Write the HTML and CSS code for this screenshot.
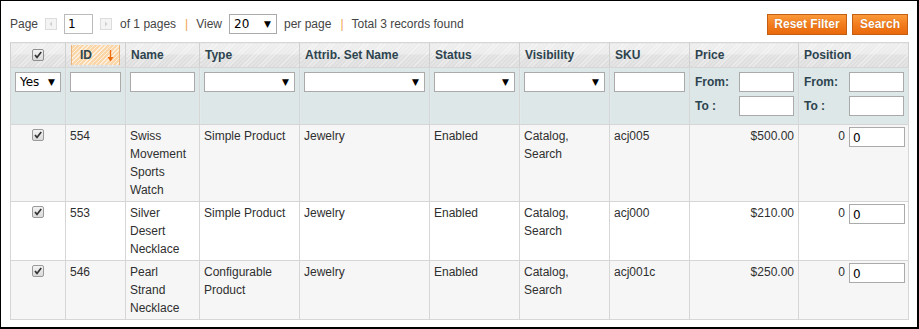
FILE: index.html
```html
<!DOCTYPE html>
<html>
<head>
<meta charset="utf-8">
<link rel="stylesheet" href="styles.css">
</head>
<body>
<div class="frame">
  <div class="toolbar">
    <div class="pager">
      <span class="lbl">Page</span>
      <span class="arrow prev"><svg width="12" height="12" viewBox="0 0 12 12"><rect x="0.5" y="0.5" width="11" height="11" fill="#f4f4f4" stroke="#dcdcdc"/><path d="M7 3.5 L4.5 6 L7 8.5 Z" fill="#d0d0d0"/></svg></span>
      <span class="txtbox page-in">1</span>
      <span class="arrow next"><svg width="12" height="12" viewBox="0 0 12 12"><rect x="0.5" y="0.5" width="11" height="11" fill="#f4f4f4" stroke="#dcdcdc"/><path d="M5 3.5 L7.5 6 L5 8.5 Z" fill="#d0d0d0"/></svg></span>
      <span class="lbl of">of 1 pages</span>
      <span class="sep">|</span>
      <span class="lbl">View</span>
      <span class="sel view-sel"><span>20</span><span class="dd">▼</span></span>
      <span class="lbl">per page</span>
      <span class="sep">|</span>
      <span class="lbl">Total 3 records found</span>
    </div>
    <div class="actions">
      <button class="btn reset">Reset Filter</button>
      <button class="btn search">Search</button>
    </div>
  </div>

  <table class="grid">
    <colgroup>
      <col class="w55"><col class="w60"><col class="w74"><col class="w100"><col class="w130"><col class="w90"><col class="w90"><col class="w80"><col class="w109"><col class="w110">
    </colgroup>
    <tr class="headings">
      <th class="c-check"><span class="cb cb-head"><svg width="12" height="12" viewBox="0 0 12 12"><defs><linearGradient id="cbg" x1="0" y1="0" x2="0" y2="1"><stop offset="0" stop-color="#f4f4f4"/><stop offset="1" stop-color="#d8d8d8"/></linearGradient></defs><rect x="0.5" y="0.5" width="11" height="11" rx="1.5" fill="url(#cbg)" stroke="#8f8f8f"/><path d="M3 6 L5 8.4 L9.2 3" fill="none" stroke="#333" stroke-width="1.7"/></svg></span></th>
      <th class="sorted"><span class="sortbox"><span>ID</span><svg class="sort-arrow" width="7" height="12" viewBox="0 0 7 12"><path d="M3.5 0 V10" stroke="#f06a0e" stroke-width="1.3"/><path d="M0.5 7 L3.5 11.5 L6.5 7 Z" fill="#f06a0e"/></svg></span></th>
      <th>Name</th>
      <th>Type</th>
      <th>Attrib. Set Name</th>
      <th>Status</th>
      <th>Visibility</th>
      <th>SKU</th>
      <th>Price</th>
      <th>Position</th>
    </tr>
    <tr class="filter">
      <th><span class="sel yes-sel"><span>Yes</span><span class="dd">▼</span></span></th>
      <th><span class="txtbox fin"></span></th>
      <th><span class="txtbox fin"></span></th>
      <th><span class="sel fsel"><span></span><span class="dd">▼</span></span></th>
      <th><span class="sel fsel"><span></span><span class="dd">▼</span></span></th>
      <th><span class="sel fsel"><span></span><span class="dd">▼</span></span></th>
      <th><span class="sel fsel"><span></span><span class="dd">▼</span></span></th>
      <th><span class="txtbox fin"></span></th>
      <th>
        <div class="range"><span class="rl">From:</span><span class="txtbox rin"></span></div>
        <div class="range"><span class="rl">To :</span><span class="txtbox rin"></span></div>
      </th>
      <th>
        <div class="range"><span class="rl">From:</span><span class="txtbox rin"></span></div>
        <div class="range"><span class="rl">To :</span><span class="txtbox rin"></span></div>
      </th>
    </tr>
    <tr class="row even">
      <td class="c-check"><span class="cb"><svg width="12" height="12" viewBox="0 0 12 12"><rect x="0.5" y="0.5" width="11" height="11" rx="1.5" fill="url(#cbg)" stroke="#9a9a9a"/><path d="M3 6 L5 8.4 L9.2 3" fill="none" stroke="#333" stroke-width="1.7"/></svg></span></td>
      <td>554</td>
      <td>Swiss Movement Sports Watch</td>
      <td>Simple Product</td>
      <td>Jewelry</td>
      <td>Enabled</td>
      <td>Catalog, Search</td>
      <td>acj005</td>
      <td class="num">$500.00</td>
      <td class="pos"><span class="posval">0</span><span class="txtbox pin">0</span></td>
    </tr>
    <tr class="row">
      <td class="c-check"><span class="cb"><svg width="12" height="12" viewBox="0 0 12 12"><rect x="0.5" y="0.5" width="11" height="11" rx="1.5" fill="url(#cbg)" stroke="#9a9a9a"/><path d="M3 6 L5 8.4 L9.2 3" fill="none" stroke="#333" stroke-width="1.7"/></svg></span></td>
      <td>553</td>
      <td>Silver Desert Necklace</td>
      <td>Simple Product</td>
      <td>Jewelry</td>
      <td>Enabled</td>
      <td>Catalog, Search</td>
      <td>acj000</td>
      <td class="num">$210.00</td>
      <td class="pos"><span class="posval">0</span><span class="txtbox pin">0</span></td>
    </tr>
    <tr class="row even">
      <td class="c-check"><span class="cb"><svg width="12" height="12" viewBox="0 0 12 12"><rect x="0.5" y="0.5" width="11" height="11" rx="1.5" fill="url(#cbg)" stroke="#9a9a9a"/><path d="M3 6 L5 8.4 L9.2 3" fill="none" stroke="#333" stroke-width="1.7"/></svg></span></td>
      <td>546</td>
      <td>Pearl Strand Necklace</td>
      <td>Configurable Product</td>
      <td>Jewelry</td>
      <td>Enabled</td>
      <td>Catalog, Search</td>
      <td>acj001c</td>
      <td class="num">$250.00</td>
      <td class="pos"><span class="posval">0</span><span class="txtbox pin">0</span></td>
    </tr>
  </table>
</div>
</body>
</html>
```

FILE: styles.css
```css
html, body {
  margin: 0;
  padding: 0;
  background: #fff;
}
.frame {
  width: 898px;
  height: 326px;
  padding: 0 9px;
  border: 1px solid #000;
  border-right-width: 2px;
  border-bottom-width: 2px;
  font-family: "Liberation Sans", Arial, sans-serif;
  font-size: 12px;
  color: #2f2f2f;
  overflow: hidden;
}
.toolbar {
  display: flex;
  justify-content: space-between;
  align-items: center;
  margin-top: 13px;
  height: 20px;
  margin-bottom: 8px;
}
.pager {
  display: flex;
  align-items: center;
  color: #444;
}
.lbl { white-space: nowrap; }
.arrow { display: flex; margin: 0 7px 0 7px; }
.txtbox {
  display: inline-block;
  box-sizing: border-box;
  height: 20px;
  border: 1px solid #aaa;
  background: #fff;
  font-family: "DejaVu Sans", sans-serif;
  font-weight: normal;
  font-size: 12px;
  line-height: 18px;
  padding: 0 3px;
  color: #000;
}
.page-in { width: 29px; border-color: #bbb; }
.of { margin-left: 1px; }
.sep { color: #f0a24e; margin: 0 8px 0 9px; }
.sel {
  display: inline-flex;
  justify-content: space-between;
  align-items: center;
  box-sizing: border-box;
  height: 20px;
  border: 1px solid #aaa;
  background: #fff;
  font-family: "DejaVu Sans", sans-serif;
  font-weight: normal;
  font-size: 12px;
  color: #000;
  padding: 0 5px 0 4px;
}
.dd { font-size: 9px; color: #000; }
.view-sel { width: 48px; margin: 0 7px; }
.actions { display: flex; gap: 5px; }
.btn {
  height: 21px;
  box-sizing: border-box;
  border: 1px solid #c35f13;
  background: linear-gradient(#fc9a3b, #f27c1e 50%, #e9690b);
  color: #fff;
  font-family: "Liberation Sans", Arial, sans-serif;
  font-weight: bold;
  font-size: 12px;
  padding: 0 6px;
  text-shadow: 0 0 1px #b75a12;
  cursor: pointer;
}
.reset { width: 80px; }
.search { width: 56px; }

.grid {
  width: 898px;
  border-collapse: collapse;
  table-layout: fixed;
  border: 1px solid #cbcbcb;
}
.w55 { width: 55px; }
.w60 { width: 60px; }
.w74 { width: 74px; }
.w100 { width: 100px; }
.w130 { width: 130px; }
.w90 { width: 90px; }
.w80 { width: 80px; }
.w109 { width: 109px; }
.w110 { width: 110px; }
.grid th, .grid td {
  border: 1px solid #d6d6d6;
  text-align: left;
  vertical-align: top;
}
.headings th {
  height: 24px;
  padding: 0 5px;
  box-sizing: border-box;
  font-weight: bold;
  color: #2d444f;
  vertical-align: middle;
  border-left: 1px solid #d0d0d0;
  border-right: 1px solid #d0d0d0;
  background:
    repeating-linear-gradient(135deg, rgba(255,255,255,0.55) 0 1px, rgba(255,255,255,0) 1px 3px),
    linear-gradient(#ececec, #e9e9e9 45%, #dedede 46%, #dcdcdc);
}
.headings th.c-check { text-align: center; padding: 0; }
.cb { display: block; width: 12px; height: 12px; margin: 0 auto; }
.cb svg { display: block; }
.headings th.sorted { padding: 2px 5px 2px 5px; }
.sortbox {
  display: flex;
  justify-content: space-between;
  align-items: center;
  height: 20px;
  box-sizing: border-box;
  padding: 0 5px 0 8px;
  border-left: 1px solid #e9b27a;
  border-right: 1px solid #e9b27a;
  background:
    repeating-linear-gradient(135deg, rgba(255,255,255,0.6) 0 1px, rgba(255,255,255,0) 1px 3px),
    #fbd6a9;
}
.sort-arrow { display: block; margin-top: 2px; }

.filter th {
  height: 57px;
  box-sizing: border-box;
  padding: 4px 4px 0 4px;
  font-weight: bold;
  color: #2d444f;
  background:
    repeating-linear-gradient(0deg, rgba(255,255,255,0.18) 0 1px, rgba(255,255,255,0) 1px 2px),
    repeating-linear-gradient(90deg, rgba(255,255,255,0.18) 0 1px, rgba(255,255,255,0) 1px 2px),
    #d6e2e4;
}
.filter .txtbox, .filter .sel { display: flex; width: 100%; }
.range {
  display: flex;
  justify-content: space-between;
  align-items: center;
  height: 20px;
  margin-bottom: 4px;
  padding-left: 1px;
}
.filter .range .rin { width: 55px; }

.row td {
  padding: 2px 4px 2px 4px;
  line-height: 18px;
  color: #2f2f2f;
}
.row.even td { background: #f6f6f6; }
.row td.c-check { padding-top: 4px; }
.row td.num { text-align: right; padding-right: 4px; }
.row td.pos { text-align: right; padding-right: 3px; }
.posval { margin-right: 4px; vertical-align: top; }
.pin {
  width: 56px;
  text-align: left;
  vertical-align: top;
  line-height: 20px;
  height: 20px;
}
```
